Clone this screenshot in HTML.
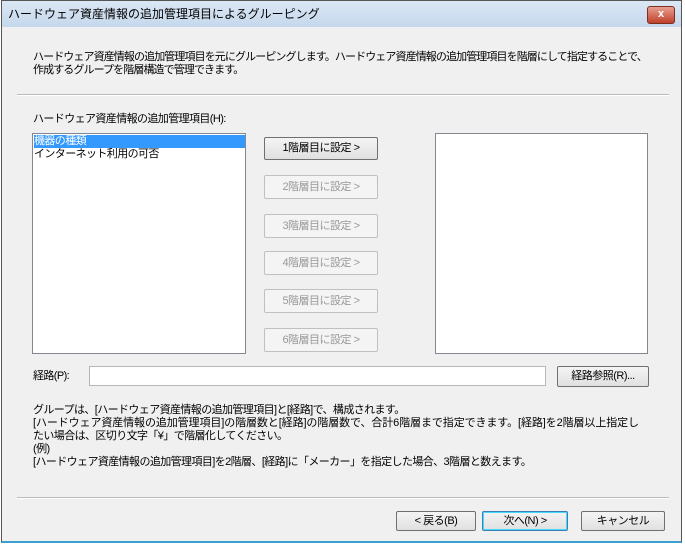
<!DOCTYPE html><html><head><meta charset="utf-8"><style>
body{margin:0;width:685px;height:547px;background:#fff;font-family:"Liberation Sans","Noto Sans CJK JP",sans-serif;font-size:11px;color:#000;position:relative;overflow:hidden}
.a{position:absolute}
.win{left:1px;top:0;width:681px;height:543px;border:1px solid #555;border-bottom:2px solid #3aa0d0;background:#f0f0f0;box-sizing:border-box}
.title{left:2px;top:1px;width:679px;height:26px;background:linear-gradient(#dbe7f4,#c5d8ec)}
.t{white-space:nowrap;line-height:13px;letter-spacing:-0.6px}
.btn{position:absolute;border:1px solid #707070;border-radius:2px;background:linear-gradient(#f4f4f4,#e0e0e0);box-sizing:border-box;text-align:center;font-size:11px;white-space:nowrap;letter-spacing:-0.5px}
.dis{border-color:#c0c0c0;color:#999;background:#f4f4f4}
.box{background:#fff;border:1px solid #828790;box-sizing:border-box}
.sep{height:1px;background:#bbb;border-bottom:1px solid #fff}
</style></head><body>
<div class="a win"></div>
<div class="a title"></div>
<div class="a t" style="left:8px;top:8px;font-size:12px;letter-spacing:0">ハードウェア資産情報の追加管理項目によるグルーピング</div>
<div class="a" style="left:647px;top:6px;width:28px;height:18px;background:linear-gradient(#e8a090,#c0402a);border:1px solid #7a3020;border-radius:3px;box-sizing:border-box;color:#fff;font-weight:bold;text-align:center;line-height:15px;font-size:11px">x</div>
<div class="a t" style="left:33px;top:51px;letter-spacing:-0.9px">ハードウェア資産情報の追加管理項目を元にグルーピングします。ハードウェア資産情報の追加管理項目を階層にして指定することで、</div>
<div class="a t" style="left:33px;top:64px;letter-spacing:-0.9px">作成するグループを階層構造で管理できます。</div>
<div class="a sep" style="left:17px;top:94px;width:652px"></div>
<div class="a t" style="left:33px;top:113px">ハードウェア資産情報の追加管理項目(H):</div>
<div class="a box" style="left:32px;top:133px;width:214px;height:221px"></div>
<div class="a t" style="left:34px;top:135px;width:211px;background:#3399ff;color:#fff">機器の種類</div>
<div class="a t" style="left:34px;top:148px">インターネット利用の可否</div>
<div class="btn" style="left:264px;top:137px;width:114px;height:23px;line-height:21px">1階層目に設定 &gt;</div>
<div class="btn dis" style="left:264px;top:175px;width:114px;height:24px;line-height:22px">2階層目に設定 &gt;</div>
<div class="btn dis" style="left:264px;top:214px;width:114px;height:24px;line-height:22px">3階層目に設定 &gt;</div>
<div class="btn dis" style="left:264px;top:251px;width:114px;height:24px;line-height:22px">4階層目に設定 &gt;</div>
<div class="btn dis" style="left:264px;top:289px;width:114px;height:24px;line-height:22px">5階層目に設定 &gt;</div>
<div class="btn dis" style="left:264px;top:328px;width:114px;height:24px;line-height:22px">6階層目に設定 &gt;</div>
<div class="a box" style="left:435px;top:133px;width:213px;height:221px"></div>
<div class="a t" style="left:33px;top:370px">経路(P):</div>
<div class="a box" style="left:89px;top:366px;width:457px;height:20px;border-color:#b8b8b8"></div>
<div class="btn" style="left:557px;top:366px;width:92px;height:21px;line-height:19px">経路参照(R)...</div>
<div class="a t" style="left:33px;top:404px">グループは、[ハードウェア資産情報の追加管理項目]と[経路]で、構成されます。</div>
<div class="a t" style="left:33px;top:417px;letter-spacing:-0.1px">[ハードウェア資産情報の追加管理項目]の階層数と[経路]の階層数で、合計6階層まで指定できます。[経路]を2階層以上指定し</div>
<div class="a t" style="left:33px;top:430px">たい場合は、区切り文字「¥」で階層化してください。</div>
<div class="a t" style="left:33px;top:443px">(例)</div>
<div class="a t" style="left:33px;top:456px">[ハードウェア資産情報の追加管理項目]を2階層、[経路]に「メーカー」を指定した場合、3階層と数えます。</div>
<div class="a sep" style="left:17px;top:497px;width:652px"></div>
<div class="btn" style="left:396px;top:511px;width:80px;height:20px;line-height:18px">&lt; 戻る(B)</div>
<div class="btn" style="left:482px;top:511px;width:86px;height:20px;line-height:18px;border-color:#3c7fb1;box-shadow:inset 0 0 0 1px #48d8fb">次へ(N) &gt;</div>
<div class="btn" style="left:581px;top:511px;width:84px;height:20px;line-height:18px">キャンセル</div>
</body></html>
